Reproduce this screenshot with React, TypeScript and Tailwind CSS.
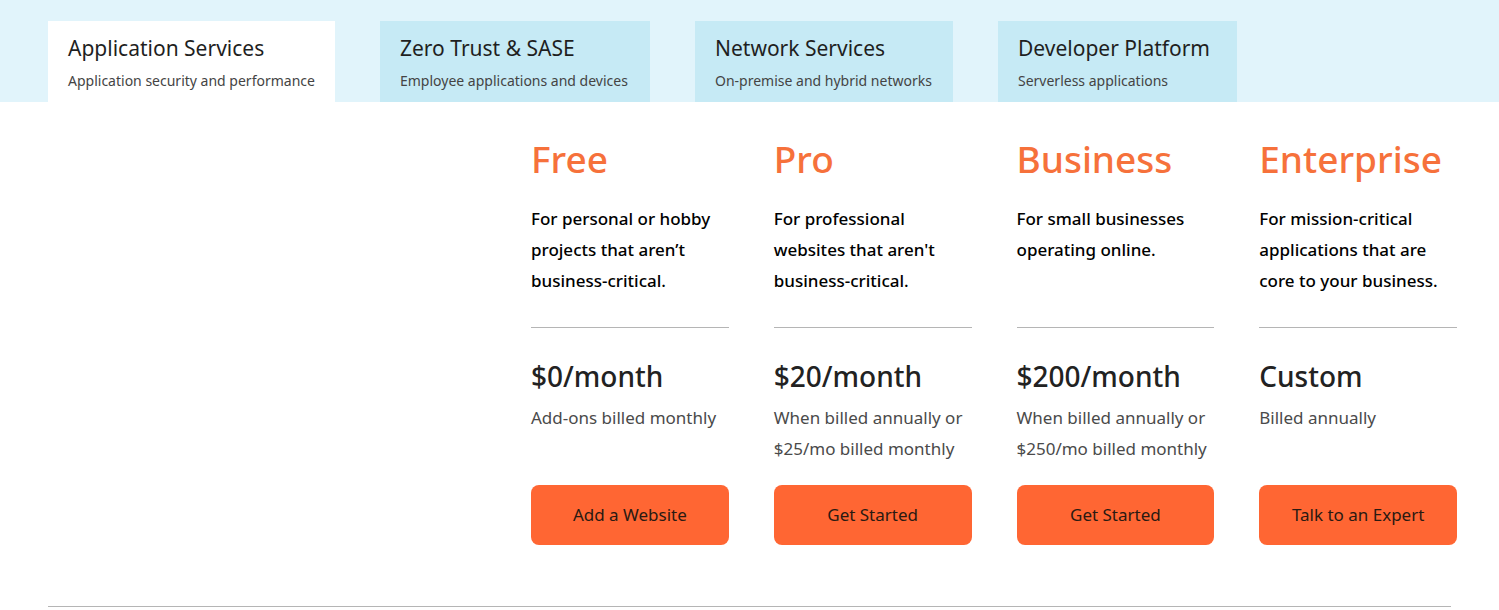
import React from 'react';

const tabs = [
  { title: 'Application Services', sub: 'Application security and performance', w: 'w-[287px]', active: true },
  { title: 'Zero Trust & SASE', sub: 'Employee applications and devices', w: 'w-[270px]' },
  { title: 'Network Services', sub: 'On-premise and hybrid networks', w: 'w-[258px]' },
  { title: 'Developer Platform', sub: 'Serverless applications', w: 'w-[239px]' },
];

const plans = [
  {
    name: 'Free',
    desc: 'For personal or hobby projects that aren’t business-critical.',
    price: '$0/month',
    note: ['Add-ons billed monthly'],
    cta: 'Add a Website',
  },
  {
    name: 'Pro',
    desc: "For professional websites that aren't business-critical.",
    price: '$20/month',
    note: ['When billed annually or', '$25/mo billed monthly'],
    cta: 'Get Started',
  },
  {
    name: 'Business',
    desc: 'For small businesses operating online.',
    price: '$200/month',
    note: ['When billed annually or', '$250/mo billed monthly'],
    cta: 'Get Started',
  },
  {
    name: 'Enterprise',
    desc: 'For mission-critical applications that are core to your business.',
    price: 'Custom',
    note: ['Billed annually'],
    cta: 'Talk to an Expert',
  },
];

function App() {
  return (
    <div className="min-h-screen bg-white" style={{ fontFamily: '"Noto Sans", "Open Sans", sans-serif' }}>
      {/* Tabs */}
      <div className="bg-[#e1f4fb] pt-[21px] px-[48px]">
        <div className="flex gap-[45px]">
          {tabs.map((t) => (
            <div
              key={t.title}
              className={`h-[81px] px-5 pt-[13px] ${t.w} ${t.active ? 'bg-white' : 'bg-[#c6eaf5]'}`}
            >
              <div className="text-[21px] leading-[28px] text-[#1f1f1f]">{t.title}</div>
              <div className="mt-[9px] text-[14px] leading-[20px] text-[#444]">{t.sub}</div>
            </div>
          ))}
        </div>
      </div>

      {/* Plans */}
      <div className="px-[48px]">
        <div className="ml-[483px] grid grid-cols-4 gap-[45px] w-[926px] pt-[35px] pb-[61px]">
          {plans.map((p) => (
            <div key={p.name} className="flex flex-col">
              <h2 className="text-[37px] leading-[44px] font-medium text-[#f6713b]">{p.name}</h2>
              <p className="mt-[22px] h-[93px] text-[17px] leading-[31px] font-medium text-black">{p.desc}</p>
              <div className="mt-[31px] border-t border-[#b5b5b5]" />
              <div className="mt-[28px] text-[28px] leading-[40px] font-medium text-[#222]">{p.price}</div>
              <div className="mt-[6px] h-[62px] text-[17px] leading-[31px] text-[#4a4a4a]">
                {p.note.map((n) => (
                  <div key={n}>{n}</div>
                ))}
              </div>
              <button className="mt-[21px] h-[60px] w-full rounded-lg bg-[#ff6633] text-[17px] text-[#2a1a12]">
                {p.cta}
              </button>
            </div>
          ))}
        </div>
        <div className="border-t border-[#b5b5b5]" />
      </div>
    </div>
  );
}

export default App;
